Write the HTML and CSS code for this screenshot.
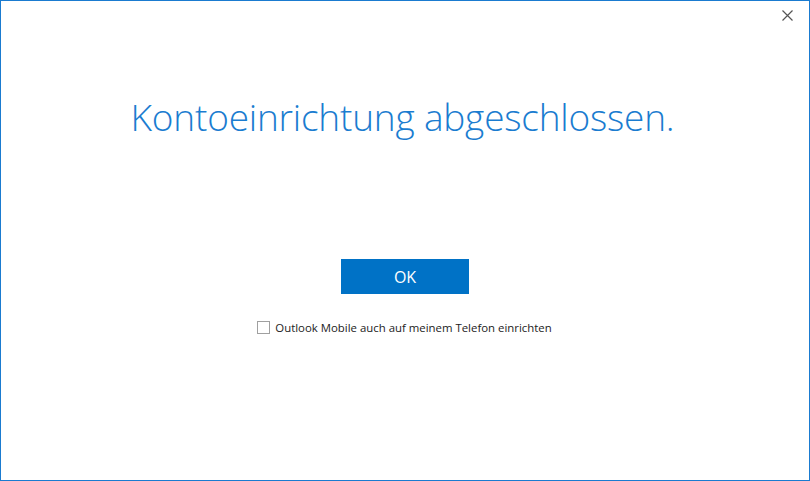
FILE: index.html
```html
<!DOCTYPE html>
<html lang="de">
<head>
<meta charset="utf-8">
<link rel="stylesheet" href="styles.css">
</head>
<body>
<div class="window">
  <button class="close" aria-label="Schließen">
    <svg width="11" height="11" viewBox="0 0 11 11"><path d="M0.5 0.5 L10.5 10.5 M10.5 0.5 L0.5 10.5" stroke="#555" stroke-width="1.2" fill="none"/></svg>
  </button>
  <h1 class="title">Kontoeinrichtung abgeschlossen.</h1>
  <button class="ok">OK</button>
  <label class="check">
    <span class="box"></span>
    <span class="label-text">Outlook Mobile auch auf meinem Telefon einrichten</span>
  </label>
</div>
</body>
</html>
```
FILE: styles.css
```css
html, body {
  margin: 0;
  padding: 0;
  background: #fff;
}
.window {
  position: relative;
  box-sizing: border-box;
  width: 810px;
  height: 481px;
  border: 1px solid #1a7bd0;
  display: flex;
  flex-direction: column;
  align-items: center;
  font-family: "Open Sans", "Segoe UI", sans-serif;
}
.close {
  position: absolute;
  top: 9px;
  right: 16px;
  width: 11px;
  height: 11px;
  padding: 0;
  border: 0;
  background: none;
  display: flex;
}
.title {
  margin: 92px 5px 0 0;
  font-weight: 300;
  font-size: 37px;
  line-height: 48px;
  color: #1a7cd0;
  letter-spacing: -0.2px;
}
.ok {
  margin-top: 118px;
  width: 128px;
  height: 35px;
  border: 0;
  background: #0072c6;
  color: #fff;
  font-family: inherit;
  font-size: 16px;
  padding: 0;
}
.check {
  margin-top: 26px;
  margin-right: 1px;
  display: flex;
  align-items: center;
  gap: 5px;
  font-size: 11.4px;
  color: #222;
}
.box {
  width: 11px;
  height: 11px;
  border: 1px solid #a0a0a0;
  background: #fff;
}
```
